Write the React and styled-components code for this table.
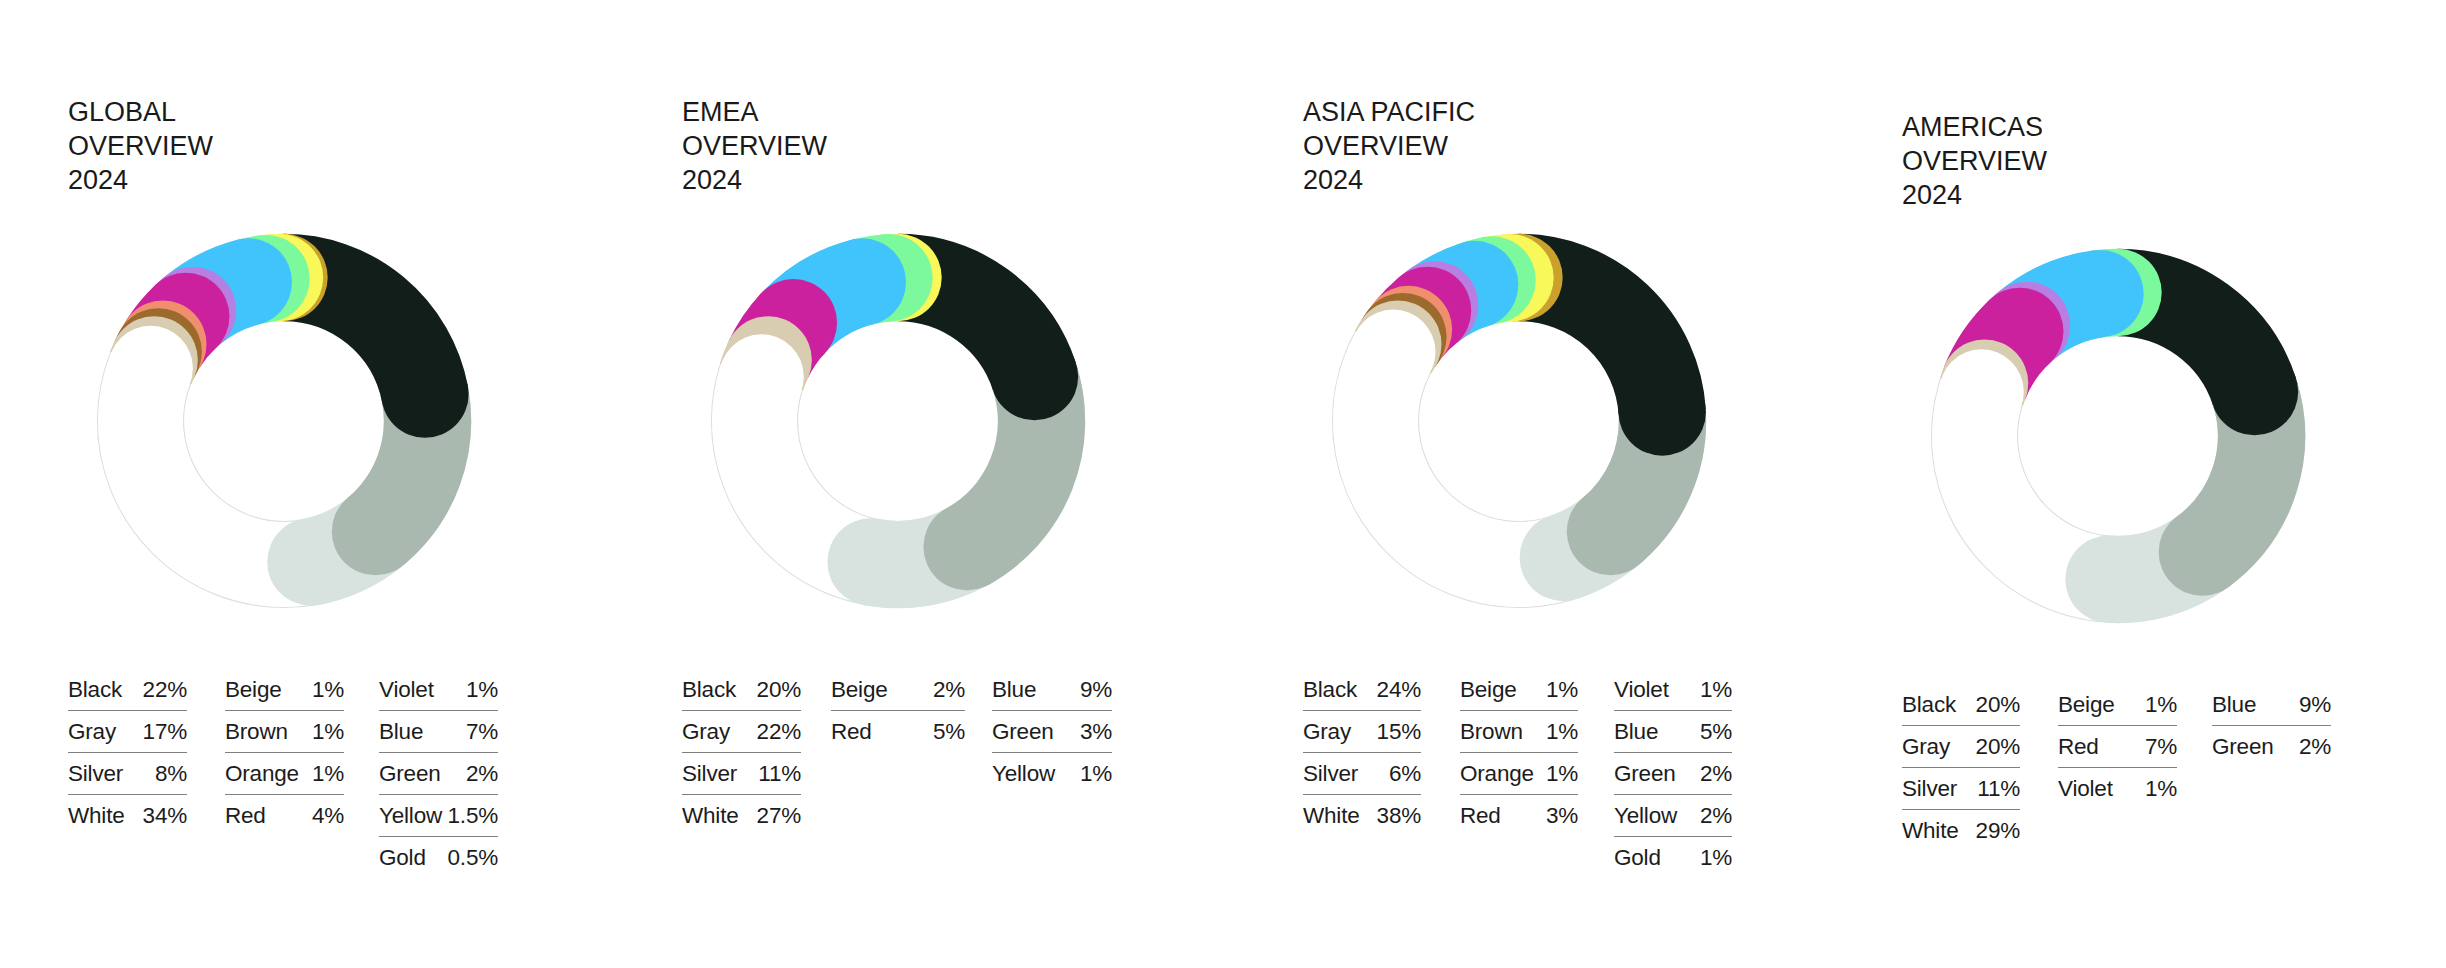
import React from 'react';
import styled, { createGlobalStyle } from 'styled-components';

const Global = createGlobalStyle`
  html, body { margin: 0; padding: 0; background: #fff; }
  body { font-family: "Liberation Sans", Arial, Helvetica, sans-serif; color: #161616; }
`;

const COLORS = {
  Black: '#121e1a',
  Gray: '#a9b9b0',
  Silver: '#d8e3df',
  White: '#ffffff',
  Beige: '#d8ccb1',
  Brown: '#9b6a2c',
  Orange: '#f08f6e',
  Red: '#cc219e',
  Violet: '#b67fe1',
  Blue: '#41c4fc',
  Green: '#7cf99c',
  Yellow: '#f9f85b',
  Gold: '#c9a12c',
};

const PANELS = [
  {
    title: ['GLOBAL', 'OVERVIEW', '2024'],
    offset: 0,
    cols: [
      { ml: 0, w: 119, items: [['Black', '22%'], ['Gray', '17%'], ['Silver', '8%'], ['White', '34%']] },
      { ml: 38, w: 119, items: [['Beige', '1%'], ['Brown', '1%'], ['Orange', '1%'], ['Red', '4%']] },
      { ml: 35, w: 119, items: [['Violet', '1%'], ['Blue', '7%'], ['Green', '2%'], ['Yellow', '1.5%'], ['Gold', '0.5%']] },
    ],
  },
  {
    title: ['EMEA', 'OVERVIEW', '2024'],
    offset: 0,
    cols: [
      { ml: 0, w: 119, items: [['Black', '20%'], ['Gray', '22%'], ['Silver', '11%'], ['White', '27%']] },
      { ml: 30, w: 134, items: [['Beige', '2%'], ['Red', '5%']] },
      { ml: 27, w: 120, items: [['Blue', '9%'], ['Green', '3%'], ['Yellow', '1%']] },
    ],
  },
  {
    title: ['ASIA PACIFIC', 'OVERVIEW', '2024'],
    offset: 0,
    cols: [
      { ml: 0, w: 118, items: [['Black', '24%'], ['Gray', '15%'], ['Silver', '6%'], ['White', '38%']] },
      { ml: 39, w: 118, items: [['Beige', '1%'], ['Brown', '1%'], ['Orange', '1%'], ['Red', '3%']] },
      { ml: 36, w: 118, items: [['Violet', '1%'], ['Blue', '5%'], ['Green', '2%'], ['Yellow', '2%'], ['Gold', '1%']] },
    ],
  },
  {
    title: ['AMERICAS', 'OVERVIEW', '2024'],
    offset: 15,
    cols: [
      { ml: 0, w: 118, items: [['Black', '20%'], ['Gray', '20%'], ['Silver', '11%'], ['White', '29%']] },
      { ml: 38, w: 119, items: [['Beige', '1%'], ['Red', '7%'], ['Violet', '1%']] },
      { ml: 35, w: 119, items: [['Blue', '9%'], ['Green', '2%']] },
    ],
  },
];

const Page = styled.div`
  width: 2446px;
  height: 968px;
  box-sizing: border-box;
  padding: 95px 0 0 68px;
  display: grid;
  grid-template-columns: 614px 621px 599px 1fr;
  align-items: start;
  background: #fff;
  overflow: hidden;
`;

const Panel = styled.section`
  display: flex;
  flex-direction: column;
  align-items: flex-start;
  padding-top: ${(p) => p.$offset}px;
`;

const Title = styled.h2`
  margin: 0;
  font-weight: 400;
  font-size: 27px;
  line-height: 34px;
  color: #1a1a1a;
`;

const TitleLine = styled.span`
  display: block;
`;

const Chart = styled.svg`
  display: block;
  margin-top: 24px;
  width: 432px;
  height: 400px;
`;

const Legend = styled.div`
  display: flex;
  align-items: flex-start;
  margin-top: 48px;
`;

const Column = styled.div`
  display: flex;
  flex-direction: column;
  width: ${(p) => p.$w}px;
  margin-left: ${(p) => p.$ml}px;
`;

const Row = styled.div`
  display: flex;
  justify-content: space-between;
  gap: 5px;
  font-size: 22.5px;
  letter-spacing: -0.2px;
  line-height: 41px;
  color: #1c1c1c;
  border-bottom: 1px solid #7f7f7f;
  white-space: nowrap;
  &:last-child {
    border-bottom: none;
  }
`;

const CX = 216;
const CY = 200;
const R = 143.5;
const W = 87.4;
const WW = 84.6;

function pt(a, r = R) {
  const t = (a * Math.PI) / 180;
  return [CX + r * Math.sin(t), CY - r * Math.cos(t)];
}

function arc(a1, a2) {
  const [x1, y1] = pt(a1);
  const [x2, y2] = pt(a2);
  const large = a2 - a1 > 180 ? 1 : 0;
  return `M${x1.toFixed(3)} ${y1.toFixed(3)} A${R} ${R} 0 ${large} 1 ${x2.toFixed(3)} ${y2.toFixed(3)}`;
}

function Donut({ segments }) {
  let acc = 0;
  const segs = segments.map(([name, pct]) => {
    const v = parseFloat(pct) * 3.6;
    const s = { name, color: COLORS[name], start: acc, end: acc + v };
    acc += v;
    return s;
  });
  const first = segs[0];
  const rest = segs.slice(1).reverse();
  const [bx, by] = pt(first.end);
  return (
    <Chart viewBox="0 0 432 400">
      <circle cx={CX} cy={CY} r={186.5} fill="none" stroke="#dcdfdd" strokeWidth="1.2" />
      <circle cx={CX} cy={CY} r={100.5} fill="none" stroke="#dcdfdd" strokeWidth="1.2" />
      <path d={arc(first.start, first.end)} fill="none" stroke={first.color} strokeWidth={W} />
      {rest.map((s) => {
        const white = s.name === 'White';
        const [ex, ey] = pt(s.end);
        return (
          <g key={s.name}>
            <path d={arc(s.start, s.end)} fill="none" stroke={s.color} strokeWidth={white ? WW : W} />
            <circle cx={ex} cy={ey} r={(white ? WW : W) / 2} fill={s.color} />
          </g>
        );
      })}
      <circle cx={bx} cy={by} r={W / 2} fill={first.color} />
    </Chart>
  );
}

export default function App() {
  return (
    <>
      <Global />
      <Page>
        {PANELS.map((p) => {
          const segments = p.cols.flatMap((c) => c.items);
          return (
            <Panel key={p.title[0]} $offset={p.offset}>
              <Title>
                {p.title.map((t) => (
                  <TitleLine key={t}>{t}</TitleLine>
                ))}
              </Title>
              <Donut segments={segments} />
              <Legend>
                {p.cols.map((c, i) => (
                  <Column key={i} $w={c.w} $ml={c.ml}>
                    {c.items.map(([n, v]) => (
                      <Row key={n}>
                        <span>{n}</span>
                        <span>{v}</span>
                      </Row>
                    ))}
                  </Column>
                ))}
              </Legend>
            </Panel>
          );
        })}
      </Page>
    </>
  );
}
